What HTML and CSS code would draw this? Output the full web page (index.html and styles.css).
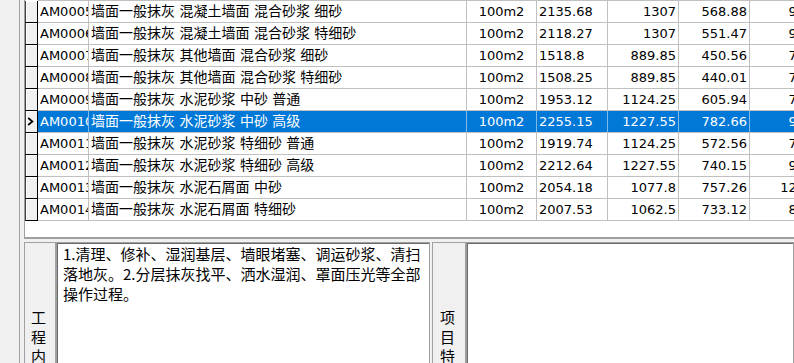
FILE: index.html
```html
<!DOCTYPE html>
<html lang="zh-CN">
<head>
    <meta charset="UTF-8">
    <title>定额子目</title>
    <link rel="stylesheet" href="styles.css">
</head>
<body>
    <div class="frame">
        <div class="grid">
            <div class="row">
                <div class="ind"></div>
                <div class="c code">AM0005</div>
                <div class="c name">墙面一般抹灰 混凝土墙面 混合砂浆 细砂</div>
                <div class="c unit">100m2</div>
                <div class="c num-l">2135.68</div>
                <div class="c num-r">1307</div>
                <div class="c num-r">568.88</div>
                <div class="c num-r">962.31</div>
            </div>
            <div class="row">
                <div class="ind"></div>
                <div class="c code">AM0006</div>
                <div class="c name">墙面一般抹灰 混凝土墙面 混合砂浆 特细砂</div>
                <div class="c unit">100m2</div>
                <div class="c num-l">2118.27</div>
                <div class="c num-r">1307</div>
                <div class="c num-r">551.47</div>
                <div class="c num-r">962.31</div>
            </div>
            <div class="row">
                <div class="ind"></div>
                <div class="c code">AM0007</div>
                <div class="c name">墙面一般抹灰 其他墙面 混合砂浆 细砂</div>
                <div class="c unit">100m2</div>
                <div class="c num-l">1518.8</div>
                <div class="c num-r">889.85</div>
                <div class="c num-r">450.56</div>
                <div class="c num-r">713.41</div>
            </div>
            <div class="row">
                <div class="ind"></div>
                <div class="c code">AM0008</div>
                <div class="c name">墙面一般抹灰 其他墙面 混合砂浆 特细砂</div>
                <div class="c unit">100m2</div>
                <div class="c num-l">1508.25</div>
                <div class="c num-r">889.85</div>
                <div class="c num-r">440.01</div>
                <div class="c num-r">713.41</div>
            </div>
            <div class="row">
                <div class="ind"></div>
                <div class="c code">AM0009</div>
                <div class="c name">墙面一般抹灰 水泥砂浆 中砂 普通</div>
                <div class="c unit">100m2</div>
                <div class="c num-l">1953.12</div>
                <div class="c num-r">1124.25</div>
                <div class="c num-r">605.94</div>
                <div class="c num-r">748.67</div>
            </div>
            <div class="row sel">
                <div class="ind">
                    <svg width="7" height="9" viewBox="0 0 7 9"><path d="M1.2 1 L5.4 4.5 L1.2 8" fill="none" stroke="#000" stroke-width="1.7"/></svg>
                </div>
                <div class="c code">AM0010</div>
                <div class="c name">墙面一般抹灰 水泥砂浆 中砂 高级</div>
                <div class="c unit">100m2</div>
                <div class="c num-l">2255.15</div>
                <div class="c num-r">1227.55</div>
                <div class="c num-r">782.66</div>
                <div class="c num-r">932.15</div>
            </div>
            <div class="row">
                <div class="ind"></div>
                <div class="c code">AM0011</div>
                <div class="c name">墙面一般抹灰 水泥砂浆 特细砂 普通</div>
                <div class="c unit">100m2</div>
                <div class="c num-l">1919.74</div>
                <div class="c num-r">1124.25</div>
                <div class="c num-r">572.56</div>
                <div class="c num-r">748.67</div>
            </div>
            <div class="row">
                <div class="ind"></div>
                <div class="c code">AM0012</div>
                <div class="c name">墙面一般抹灰 水泥砂浆 特细砂 高级</div>
                <div class="c unit">100m2</div>
                <div class="c num-l">2212.64</div>
                <div class="c num-r">1227.55</div>
                <div class="c num-r">740.15</div>
                <div class="c num-r">932.15</div>
            </div>
            <div class="row">
                <div class="ind"></div>
                <div class="c code">AM0013</div>
                <div class="c name">墙面一般抹灰 水泥石屑面 中砂</div>
                <div class="c unit">100m2</div>
                <div class="c num-l">2054.18</div>
                <div class="c num-r">1077.8</div>
                <div class="c num-r">757.26</div>
                <div class="c num-r">1244.03</div>
            </div>
            <div class="row">
                <div class="ind"></div>
                <div class="c code">AM0014</div>
                <div class="c name">墙面一般抹灰 水泥石屑面 特细砂</div>
                <div class="c unit">100m2</div>
                <div class="c num-l">2007.53</div>
                <div class="c num-r">1062.5</div>
                <div class="c num-r">733.12</div>
                <div class="c num-r">868.17</div>
            </div>
        </div>

        <div class="detail">
            <div class="cap"><span>工程内容</span></div>
            <div class="memo memo-work">1.清理、修补、湿润基层、墙眼堵塞、调运砂浆、清扫落地灰。2.分层抹灰找平、洒水湿润、罩面压光等全部操作过程。</div>
            <div class="cap cap-feat"><span>项目特征</span></div>
            <div class="memo memo-feat"></div>
        </div>
    </div>
</body>
</html>
```

FILE: styles.css
```css
body {
    margin: 0;
    width: 794px;
    height: 363px;
    overflow: hidden;
    background-color: #f0f0f0;
    font-family: "DejaVu Sans", "Noto Sans CJK SC", sans-serif;
    font-size: 13px;
    color: #000;
}

.frame {
    margin-left: 19px;
    padding-left: 4px;
    border-left: 1px solid #a0a0a0;
    height: 100vh;
}

/* data grid */
.grid {
    box-sizing: border-box;
    height: 239px;
    padding-top: 1px;
    background-color: #fff;
    border-left: 1px solid #a0a0a0;
    border-bottom: 2px solid #a0a0a0;
    overflow: hidden;
}

.row {
    display: grid;
    grid-template-columns: 13px 51px 378px 70px 71px 71px 71px 87px;
    height: 22px;
}

.row:first-child .c {
    box-shadow: 0 -1px 0 #c0c0c0;
}

.ind {
    box-sizing: border-box;
    background-color: #f0f0f0;
    border-left: 1px solid #404040;
    border-right: 1px solid #000;
    border-bottom: 1px solid #000;
    box-shadow: inset 1px 1px 0 #fff;
    display: flex;
    align-items: center;
    padding-left: 1px;
}

.c {
    box-sizing: border-box;
    border-right: 1px solid #c0c0c0;
    border-bottom: 1px solid #c0c0c0;
    line-height: 21px;
    padding: 0 2px;
    white-space: nowrap;
    overflow: hidden;
}

.name {
    font-size: 14px;
}

.unit {
    text-align: center;
}

.num-r {
    text-align: right;
}

.sel .c {
    background-color: #0078d7;
    color: #fff;
    border-right-color: #80bbeb;
}

/* lower panel */
.detail {
    box-sizing: border-box;
    display: flex;
    height: 211px;
    padding-top: 3px;
}

.cap {
    box-sizing: border-box;
    width: 32px;
    border: 1px solid #a0a0a0;
    background-color: #f0f0f0;
    display: flex;
    align-items: center;
    justify-content: center;
    padding-right: 3px;
    font-family: "Noto Sans CJK SC", sans-serif;
    font-size: 15px;
}

.cap span {
    width: 15px;
    line-height: 19.5px;
}

.cap-feat {
    width: 34px;
    margin-left: 2px;
}

.memo {
    box-sizing: border-box;
    background-color: #fff;
    border: 1px solid #a0a0a0;
    box-shadow: inset 1px 1px 0 #696969;
    font-family: "Noto Sans CJK SC", sans-serif;
    font-size: 15px;
    line-height: 20px;
    padding: 1px 2px 0 6px;
}

.memo-work {
    width: 374px;
}

.memo-feat {
    flex: 1;
}
```
